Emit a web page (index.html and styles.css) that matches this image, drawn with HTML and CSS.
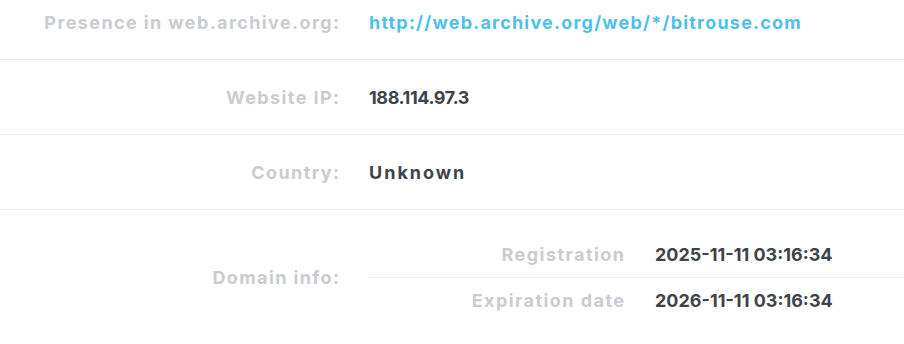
FILE: index.html
```html
<!DOCTYPE html>
<html>
<head>
<meta charset="utf-8">
<link rel="stylesheet" href="styles.css">
</head>
<body>
<div class="info">
  <div class="row first">
    <div class="label">Presence in web.archive.org:</div>
    <div class="value"><a class="link" href="#">http://web.archive.org/web/*/bitrouse.com</a></div>
  </div>
  <div class="row">
    <div class="label">Website IP:</div>
    <div class="value num">188.114.97.3</div>
  </div>
  <div class="row">
    <div class="label">Country:</div>
    <div class="value word">Unknown</div>
  </div>
  <div class="row domain">
    <div class="label">Domain info:</div>
    <div class="sub">
      <div class="subrow">
        <div class="sublabel">Registration</div>
        <div class="subvalue">2025-11-11 03:16:34</div>
      </div>
      <div class="subrow">
        <div class="sublabel">Expiration date</div>
        <div class="subvalue">2026-11-11 03:16:34</div>
      </div>
    </div>
  </div>
</div>
</body>
</html>
```
FILE: styles.css
```css
html, body {
  margin: 0;
  padding: 0;
  background: #ffffff;
}
body {
  font-family: Inter, "Open Sans", sans-serif;
  font-weight: 700;
  font-size: 18px;
  overflow: hidden;
}
.info {
  margin-top: -15px;
}
.row {
  display: grid;
  grid-template-columns: 339px 1fr;
  column-gap: 30px;
  align-items: center;
  height: 75px;
  border-bottom: 1px solid #ececec;
  box-sizing: border-box;
}
.label {
  text-align: right;
  color: #c9ccd1;
  white-space: nowrap;
  letter-spacing: 1.4px;
  margin-right: -1.4px;
}
.value {
  color: #40434a;
  white-space: nowrap;
}
.value.word {
  letter-spacing: 2px;
}
.value.num {
  letter-spacing: -0.4px;
}
.link {
  color: #4fc0ec;
  text-decoration: none;
  letter-spacing: 1.2px;
}
.row.domain {
  height: auto;
  border-bottom: none;
  padding: 22px 0 21px;
}
.sub {
  display: flex;
  flex-direction: column;
}
.subrow {
  display: grid;
  grid-template-columns: 255px 1fr;
  column-gap: 31px;
  align-items: center;
  height: 45px;
}
.subrow + .subrow {
  border-top: 1px solid #ececec;
}
.sublabel {
  text-align: right;
  color: #c9ccd1;
  white-space: nowrap;
  letter-spacing: 1.45px;
  margin-right: -1.45px;
}
.subvalue {
  color: #40434a;
  white-space: nowrap;
}
```
